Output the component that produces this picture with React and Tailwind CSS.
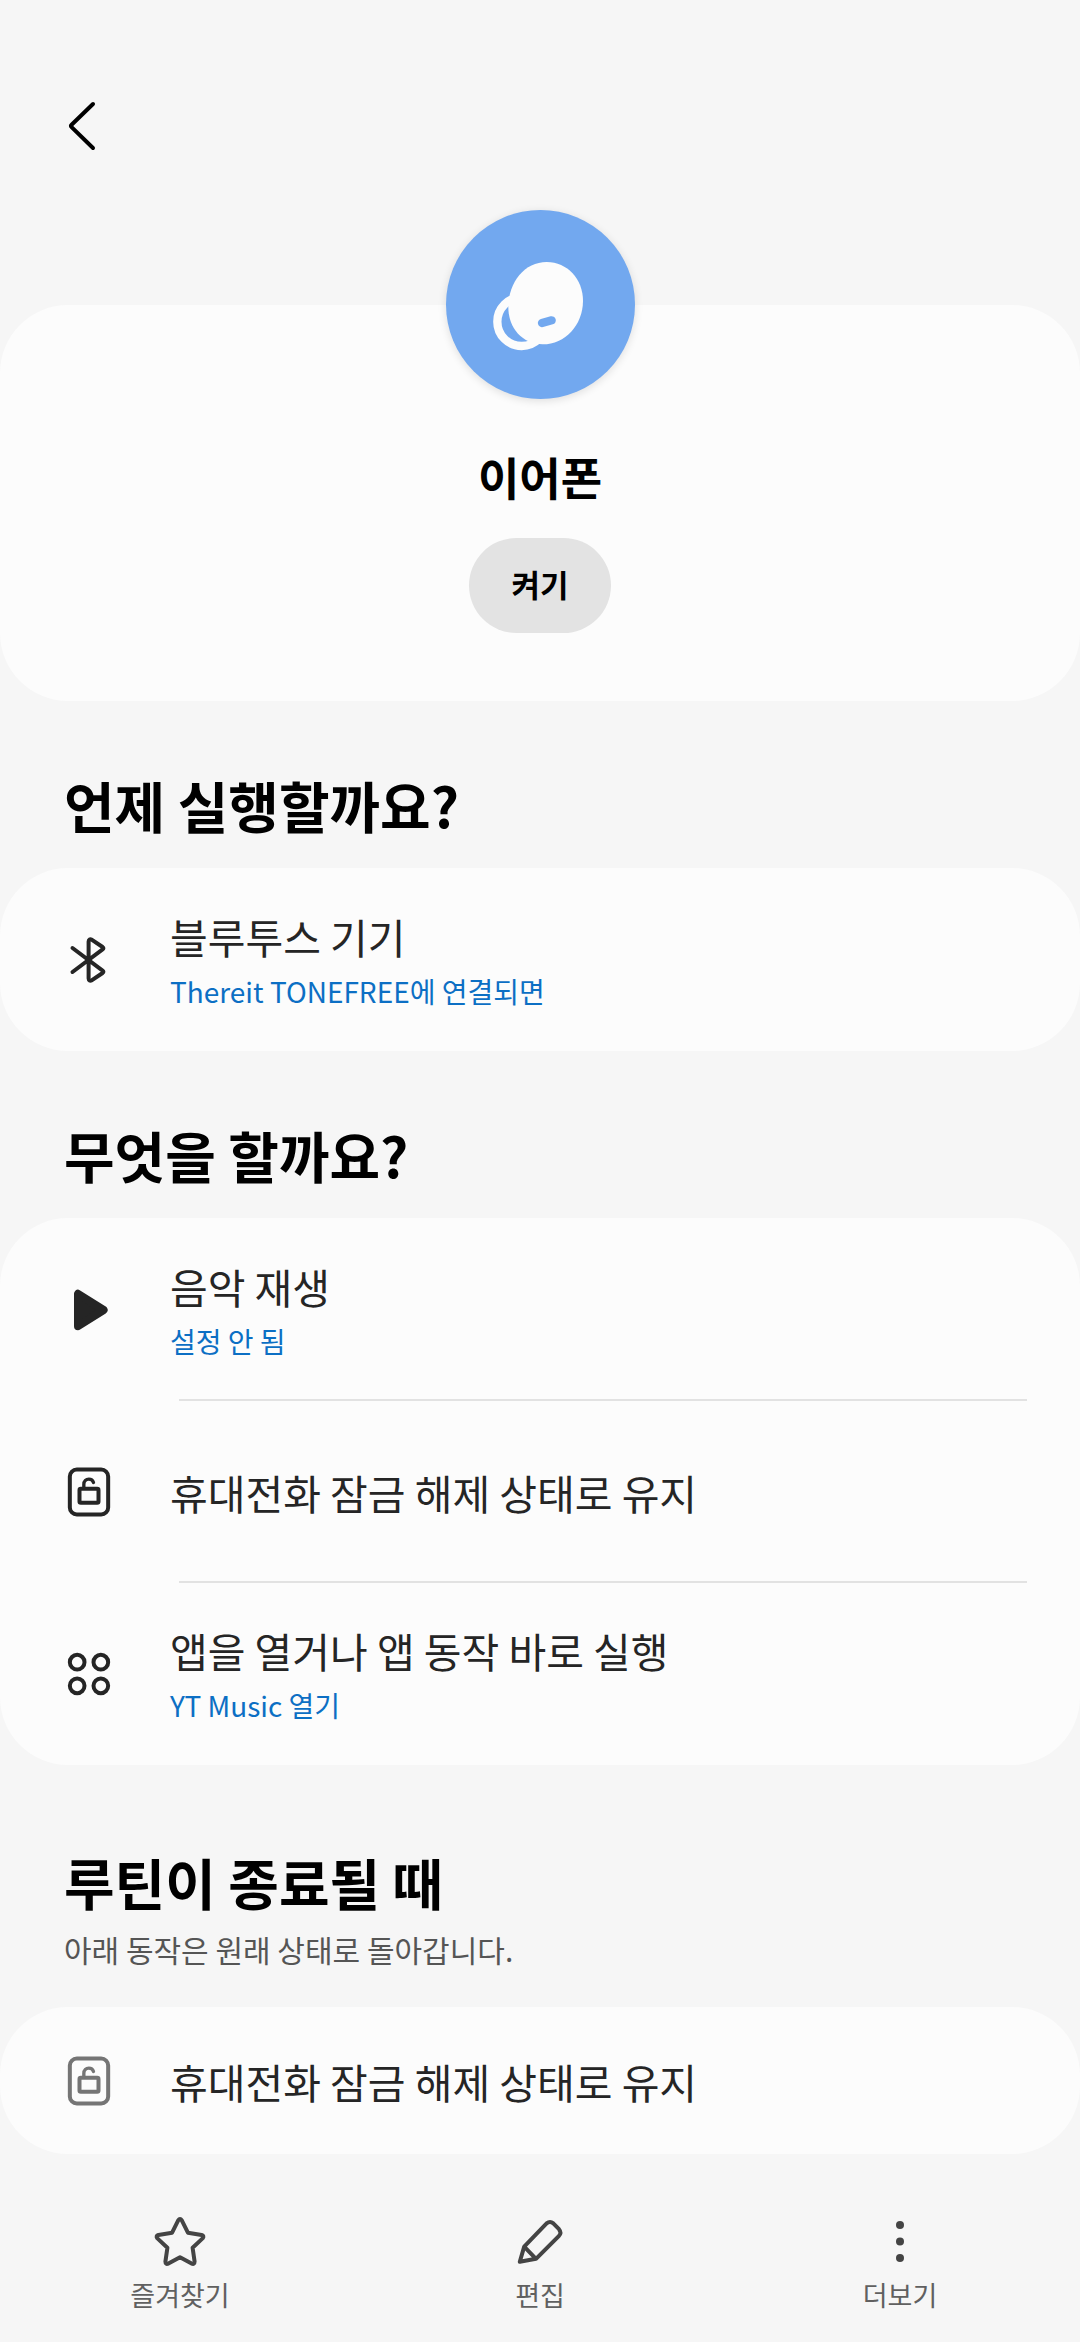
import React from "react";

const BluetoothIcon = () => (
  <svg viewBox="0 0 50 50" className="size-[50px]" fill="none" stroke="currentColor" strokeWidth="4" strokeLinecap="round" strokeLinejoin="round">
    <path d="M8.5 13 L38.6 35.6 Q40.2 36.8 38.6 38 L28 45.2 Q24.8 46.8 24.6 43.4 V6.6 Q24.8 3.2 28 4.8 L38.6 12 Q40.2 13.2 38.6 14.4 L8.5 37" />
  </svg>
);

const PlayIcon = () => (
  <svg viewBox="0 0 50 50" className="size-[50px]" fill="currentColor" stroke="currentColor" strokeWidth="8" strokeLinejoin="round">
    <path d="M14 8.8 V41.2 L39.6 25 Z" />
  </svg>
);

const UnlockIcon = () => (
  <svg viewBox="43.5 79.5 150 150" className="size-[50px]" fill="none" stroke="currentColor" strokeWidth="12" strokeLinecap="round">
    <rect x="61" y="87" width="115" height="135" rx="21" />
    <rect x="90" y="145" width="57" height="42" rx="4" />
    <path d="M103 143 V132 C103 121 110 116 118 116 C125 116 130 120 132 126" strokeWidth="10" />
  </svg>
);

const AppsIcon = () => (
  <svg viewBox="43.5 625.5 150 150" className="size-[50px]" fill="none" stroke="currentColor" strokeWidth="12">
    <circle cx="83" cy="665" r="22" />
    <circle cx="154" cy="665" r="22" />
    <circle cx="83" cy="736" r="22" />
    <circle cx="154" cy="736" r="22" />
  </svg>
);

const StarIcon = () => (
  <svg viewBox="0 0 56 56" className="size-14" fill="none" stroke="currentColor" strokeWidth="4" strokeLinejoin="round">
    <path d="M26.2 7.4 Q28 4.6 29.8 7.4 L35.9 19.7 L49.6 22 Q52.6 23 50.6 25.4 L40.6 34.7 L42.6 48.6 Q42.6 51.8 39.6 50.6 L28 44.2 L16.4 50.6 Q13.4 51.8 13.4 48.6 L15.4 34.7 L5.4 25.4 Q3.4 23 6.4 22 L20.1 19.7 Z" />
  </svg>
);

const PencilIcon = () => (
  <svg viewBox="0 0 56 56" className="size-14" fill="none" stroke="currentColor" strokeWidth="4" strokeLinejoin="round">
    <path d="M12.2 33.6 L34.6 10.4 Q38 7.6 41.3 10.4 L47 16.2 Q49.8 19.5 47 22.8 L24 45.8 L7.8 48.8 Z M12.2 33.6 L24 45.8" />
  </svg>
);

const MoreIcon = () => (
  <svg viewBox="0 0 56 56" className="size-14" fill="currentColor">
    <circle cx="28" cy="12" r="4" />
    <circle cx="28" cy="28.5" r="4" />
    <circle cx="28" cy="45" r="4" />
  </svg>
);

const EarbudIcon = () => (
  <svg viewBox="78 60 567 567" className="size-full">
    <circle cx="305" cy="395" r="73" fill="none" stroke="#fcfcfc" strokeWidth="25" />
    <path d="M380 216 C442 216 489 268 489 332 C489 405 435 463 368 463 C308 463 265 415 265 352 C265 275 315 216 380 216 Z" fill="#fcfcfc" />
    <path d="M366 399 L395 391" stroke="#72a8ef" strokeWidth="25" strokeLinecap="round" />
  </svg>
);

const WHEN_ITEMS = [
  { icon: BluetoothIcon, title: "블루투스 기기", detail: "Thereit TONEFREE에 연결되면" },
];

const ACTION_ITEMS = [
  { icon: PlayIcon, title: "음악 재생", detail: "설정 안 됨" },
  { icon: UnlockIcon, title: "휴대전화 잠금 해제 상태로 유지" },
  { icon: AppsIcon, title: "앱을 열거나 앱 동작 바로 실행", detail: "YT Music 열기" },
];

const FOOTER_ITEMS = [
  { icon: StarIcon, label: "즐겨찾기" },
  { icon: PencilIcon, label: "편집" },
  { icon: MoreIcon, label: "더보기" },
];

const RoutineItem = ({ icon: Icon, title, detail }) => (
  <div className="flex min-h-[183px] items-center gap-14 px-16">
    <Icon />
    <div className="min-w-0 flex-1">
      <p className="text-[41px] leading-[52px]">{title}</p>
      {detail && <p className="mt-2.5 text-[28px] leading-[38px] text-[#0c6fc4]">{detail}</p>}
    </div>
  </div>
);

const RoutineList = ({ items }) => (
  <ul className="rounded-[68px] bg-[#fcfcfc]">
    {items.map((item, index) => (
      <li key={item.title}>
        {index > 0 && <hr className="-mt-0.5 -mb-px mr-[53px] ml-[179px] border-t-2 border-[#e2e2e2]" />}
        <RoutineItem {...item} />
      </li>
    ))}
  </ul>
);

const SectionTitle = ({ children }) => (
  <h2 className="text-[55px] leading-[80px] font-bold text-black">{children}</h2>
);

const App = () => {
  return (
    <div className="min-h-screen bg-[#f6f6f6] font-['Noto_Sans_CJK_KR',sans-serif] text-[#252525]">
      <header className="px-10 pt-[84px] pb-[137px]">
        <button type="button" aria-label="뒤로" className="flex size-[84px] items-center justify-center text-black">
          <svg viewBox="0 0 50 50" className="size-[50px]" fill="none" stroke="currentColor" strokeWidth="4" strokeLinecap="round" strokeLinejoin="round">
            <path d="M36 3 L14.6 23.8 Q13.4 25 14.6 26.2 L36 47" />
          </svg>
        </button>
      </header>

      <main>
        <section className="flex flex-col items-center rounded-[68px] bg-[#fcfcfc] pb-[68px]">
          <div className="-mt-[95px] size-[189px] rounded-full bg-[#72a8ef] shadow-[0_2px_8px_rgba(0,0,0,0.12)]">
            <EarbudIcon />
          </div>
          <h1 className="mt-[50px] text-[45px] leading-[56px] font-bold text-black">이어폰</h1>
          <button type="button" className="mt-[33px] rounded-full bg-[#e3e3e3] px-[42px] pt-[22px] pb-[26px] text-[31px] leading-[47px] font-bold text-black">
            켜기
          </button>
        </section>

        <section>
          <div className="px-16 pt-[63px] pb-6">
            <SectionTitle>언제 실행할까요?</SectionTitle>
          </div>
          <RoutineList items={WHEN_ITEMS} />
        </section>

        <section>
          <div className="px-16 pt-[63px] pb-6">
            <SectionTitle>무엇을 할까요?</SectionTitle>
          </div>
          <RoutineList items={ACTION_ITEMS} />
        </section>

        <section>
          <div className="px-16 pt-[76px] pb-[38px]">
            <SectionTitle>루틴이 종료될 때</SectionTitle>
            <p className="mt-2 text-[30px] leading-[40px] text-[#555555]">아래 동작은 원래 상태로 돌아갑니다.</p>
          </div>
          <div className="flex min-h-[147px] items-center gap-14 rounded-[68px] bg-[#fcfcfc] px-16">
            <span className="text-[#757575]">
              <UnlockIcon />
            </span>
            <p className="text-[41px] leading-[52px]">휴대전화 잠금 해제 상태로 유지</p>
          </div>
        </section>
      </main>

      <footer className="grid grid-cols-3 pt-[59px] pb-[29px]">
        {FOOTER_ITEMS.map(({ icon: Icon, label }) => (
          <button key={label} type="button" className="flex flex-col items-center gap-2 text-[#444444]">
            <Icon />
            <span className="text-[27px] leading-[36px] text-[#606060]">{label}</span>
          </button>
        ))}
      </footer>
    </div>
  );
};

export default App;
